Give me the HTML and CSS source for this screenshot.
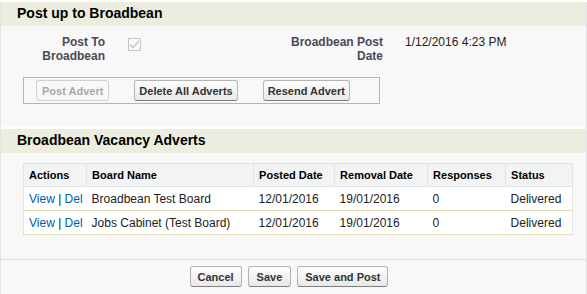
FILE: index.html
```html
<!DOCTYPE html>
<html lang="en">
<head>
  <meta charset="UTF-8">
  <title>Post up to Broadbean</title>
  <link rel="stylesheet" href="styles.css">
</head>
<body>
  <div class="page">
    <h3 class="sub-header">Post up to Broadbean</h3>
    <div class="fields">
      <div class="field-label">Post To<br>Broadbean</div>
      <div class="field-value"><span class="checkbox"><svg width="11" height="9" viewBox="0 0 11 9"><path d="M1 4.5 L4 7.5 L10 1" fill="none" stroke="#c4c4c4" stroke-width="1.4"/></svg></span></div>
      <div class="field-label">Broadbean Post<br>Date</div>
      <div class="field-value">1/12/2016 4:23 PM</div>
    </div>
    <div class="button-box">
      <button class="btn" disabled>Post Advert</button>
      <button class="btn">Delete All Adverts</button>
      <button class="btn">Resend Advert</button>
    </div>

    <h3 class="sub-header second">Broadbean Vacancy Adverts</h3>
    <table class="list">
      <thead>
        <tr>
          <th class="col-actions">Actions</th>
          <th class="col-board">Board Name</th>
          <th class="col-posted">Posted Date</th>
          <th class="col-removal">Removal Date</th>
          <th class="col-resp">Responses</th>
          <th>Status</th>
        </tr>
      </thead>
      <tbody>
        <tr>
          <td class="actions"><a href="#">View</a> | <a href="#">Del</a></td>
          <td>Broadbean Test Board</td>
          <td>12/01/2016</td>
          <td>19/01/2016</td>
          <td>0</td>
          <td>Delivered</td>
        </tr>
        <tr>
          <td class="actions"><a href="#">View</a> | <a href="#">Del</a></td>
          <td>Jobs Cabinet (Test Board)</td>
          <td>12/01/2016</td>
          <td>19/01/2016</td>
          <td>0</td>
          <td>Delivered</td>
        </tr>
      </tbody>
    </table>

    <div class="footer">
      <button class="btn">Cancel</button>
      <button class="btn">Save</button>
      <button class="btn">Save and Post</button>
    </div>
  </div>
</body>
</html>
```

FILE: styles.css
```css
html, body {
    margin: 0;
    padding: 0;
}
body {
    font-family: Arial, "Liberation Sans", sans-serif;
    font-size: 12px;
    color: #222;
    background: #fff;
}
.page {
    background: #f8f8f8;
    border-left: 1px solid #e4e4e4;
    border-right: 1px solid #e4e4e4;
    margin-top: 2px;
    height: 292px;
    box-sizing: border-box;
}
.sub-header {
    margin: 0;
    background: #ecedde;
    font-size: 14px;
    font-weight: bold;
    color: #000;
    padding: 4px 16px 5px;
    height: 15px;
    line-height: 15px;
}
.sub-header.second {
    margin-top: 23px;
    border-top: 2px solid #fff;
}
.fields {
    display: grid;
    grid-template-columns: 104px 278px 190px;
    padding-top: 9px;
}
.field-label {
    text-align: right;
    font-weight: bold;
    color: #4a4a56;
    line-height: 14px;
}
.field-label:nth-child(3) {
    grid-column: 2;
    grid-row: 1;
    justify-self: end;
}
.fields .field-value:nth-child(2) {
    grid-column: 2;
    grid-row: 1;
    padding-left: 23px;
    padding-top: 3px;
}
.fields .field-value:nth-child(4) {
    grid-column: 3;
    grid-row: 1;
    padding-left: 22px;
    line-height: 14px;
}
.checkbox {
    display: block;
    width: 11px;
    height: 11px;
    border: 1px solid #c6c6c6;
    background: #fafafa;
    line-height: 0;
}
.checkbox svg {
    margin-top: 1px;
}
.button-box {
    margin: 14px 0 0 22px;
    width: 357px;
    height: 27px;
    border: 1px solid #b5b5b5;
    box-sizing: border-box;
    display: flex;
    align-items: center;
    padding: 0 0 0 12px;
    gap: 25px;
}
.btn {
    font-family: Arial, "Liberation Sans", sans-serif;
    font-size: 11px;
    font-weight: bold;
    color: #333;
    background: linear-gradient(#fdfdfd, #e8e8e8);
    border: 1px solid #b5b5b5;
    border-bottom-color: #7f7f7f;
    border-radius: 3px;
    padding: 0 4px;
    height: 21px;
    margin: 0;
}
.btn:disabled {
    color: #a8a8a8;
    border-color: #d0d0d0;
    background: #f8f8f8;
    padding: 0 5px;
}
.list {
    margin: 10px 0 0 22px;
    width: 550px;
    border-collapse: collapse;
    background: #fff;
    border: 1px solid #e0e3e5;
}
.list th {
    background: #f2f3f3;
    font-size: 11px;
    font-weight: bold;
    color: #000;
    text-align: left;
    padding: 0 5px;
    height: 22px;
    border: 1px solid #e0e3e5;
}
.list td {
    padding: 0 5px;
    height: 23px;
    border-bottom: 1px solid #e3deb8;
    white-space: nowrap;
}
.list td.actions {
    padding-right: 4px;
}
.list a {
    color: #015ba7;
    text-decoration: none;
}
.col-actions { width: 51px; }
.col-board { width: 156px; }
.col-posted { width: 70px; }
.col-removal { width: 82px; }
.col-resp { width: 67px; }
.footer {
    margin-top: 24px;
    border-top: 1px solid #dbdbdb;
    display: flex;
    justify-content: center;
    gap: 6px;
    padding-top: 6px;
    padding-right: 9px;
}
.footer .btn {
    padding: 0 7px;
}
.footer .btn:nth-child(2) {
    padding: 0 8px;
}
```
